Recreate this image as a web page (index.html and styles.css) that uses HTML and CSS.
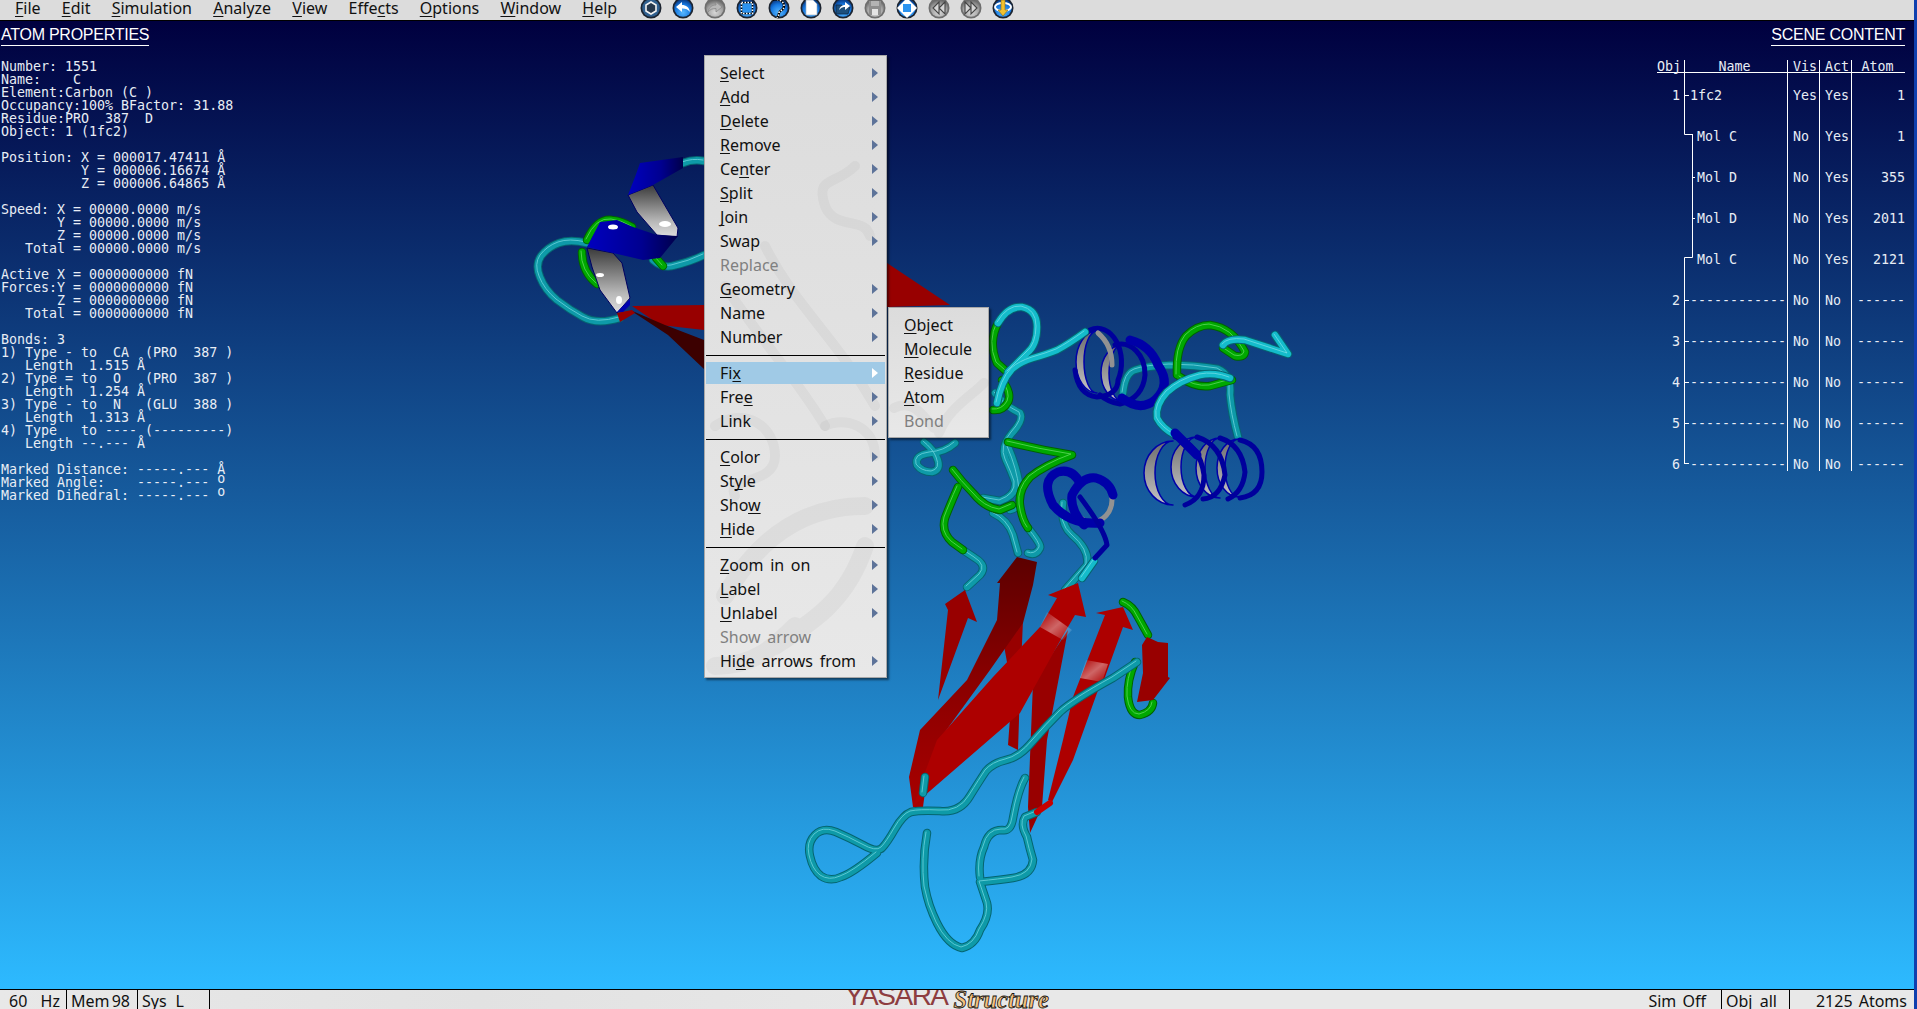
FILE: index.html
```html
<!doctype html>
<html lang="en">
	<head>
		<meta charset="utf-8" />
		<title>YASARA Structure</title>
		<link rel="stylesheet" href="styles.css">
	</head>
	<body>
		<svg class="defs" width="0" height="0">
			<defs>
				<radialGradient id="btn-blue" cx="50%" cy="75%" r="70%">
					<stop offset="0" stop-color="#58b8ff" />
					<stop offset="0.65" stop-color="#1678e0" />
					<stop offset="1" stop-color="#0a3f8c" />
				</radialGradient>
				<radialGradient id="btn-gray" cx="50%" cy="75%" r="70%">
					<stop offset="0" stop-color="#d8d8d8" />
					<stop offset="0.65" stop-color="#a2a2a2" />
					<stop offset="1" stop-color="#6a6a6a" />
				</radialGradient>
				<g id="btn-b">
					<circle cx="11" cy="11" r="10.5" fill="#1c2430" />
					<circle cx="11" cy="11" r="8.8" fill="url(#btn-blue)" />
				</g>
				<g id="btn-g">
					<circle cx="11" cy="11" r="10.5" fill="#6e6e6e" />
					<circle cx="11" cy="11" r="8.8" fill="url(#btn-gray)" />
				</g>
			</defs>
		</svg>

		<div class="window">
			<header class="menubar">
				<nav class="menubar-nav">
					<span><u>F</u>ile</span>
					<span><u>E</u>dit</span>
					<span><u>S</u>imulation</span>
					<span><u>A</u>nalyze</span>
					<span><u>V</u>iew</span>
					<span>Effe<u>c</u>ts</span>
					<span><u>O</u>ptions</span>
					<span><u>W</u>indow</span>
					<span><u>H</u>elp</span>
				</nav>
				<div class="toolbar">
					<svg viewBox="0 0 22 22"><circle cx="11" cy="11" r="10.5" fill="#1c2430" /><circle cx="11" cy="11" r="8.8" fill="#2f5f8e" /><path d="M11 5l5 3v6l-5 3-5-3V8z" fill="#26384c" stroke="#f2f2f2" stroke-width="1.6" /></svg>
					<svg viewBox="0 0 22 22"><use href="#btn-b" /><path d="M4 10l6-5v3c4 0 7 2 8 7-2-2.500-4-3.500-8-3.500V15z" fill="#fff" /></svg>
					<svg viewBox="0 0 22 22"><use href="#btn-g" /><path d="M18 10l-6-5v3c-4 0-7 2-8 7 2-2.500 4-3.500 8-3.500V15z" fill="#b8b8b8" stroke="#8a8a8a" stroke-width="0.8" /></svg>
					<svg viewBox="0 0 22 22"><use href="#btn-b" /><rect x="5.500" y="5.500" width="11" height="11" fill="#2b93f0" stroke="#000" stroke-width="1.600" /><rect x="5.500" y="5.500" width="11" height="11" fill="none" stroke="#fff" stroke-width="1.600" stroke-dasharray="1.500 1.500" /></svg>
					<svg viewBox="0 0 22 22"><use href="#btn-b" /><path d="M3 3c5-2 13 0 13 6 0 5-5 4-5 7 0 2-1 4-2 5" fill="none" stroke="#000" stroke-width="2.400" /><path d="M3 3c5-2 13 0 13 6 0 5-5 4-5 7 0 2-1 4-2 5" fill="none" stroke="#fff" stroke-width="1.600" stroke-dasharray="1.500 1.500" /></svg>
					<svg viewBox="0 0 22 22"><use href="#btn-b" /><path d="M6 3h7l4 4v11H6z" fill="#fff" stroke="#9ab" stroke-width="0.600" /></svg>
					<svg viewBox="0 0 22 22"><use href="#btn-b" /><path d="M4 8h6l1 2h7l-2 7H4z" fill="#1d4f7c" stroke="#0c2a48" stroke-width="0.800" /><path d="M7 13c1-4 4-5 6-5V5l5 4-5 4v-3c-3 0-4 1-6 3z" fill="#fff" /></svg>
					<svg viewBox="0 0 22 22"><use href="#btn-g" /><path d="M5 4h12v14H5z" fill="#8e8e8e" /><path d="M7 4h8v5H7z" fill="#b4b4b4" /><path d="M8 12h6v6H8z" fill="#e4e4e4" /></svg>
					<svg viewBox="0 0 22 22"><use href="#btn-b" /><path d="M11 1l10 10-10 10L1 11z" fill="#fff" /><rect x="7" y="7" width="8" height="8" fill="#2b93f0" /></svg>
					<svg viewBox="0 0 22 22"><use href="#btn-g" /><path d="M11 5l-6 6 6 6zM17 5l-6 6 6 6z" fill="#d4d4d4" stroke="#444" stroke-width="1.100" /></svg>
					<svg viewBox="0 0 22 22"><use href="#btn-g" /><path d="M5 5l6 6-6 6zM11 5l6 6-6 6z" fill="#d4d4d4" stroke="#444" stroke-width="1.100" /></svg>
					<svg viewBox="0 0 22 22"><use href="#btn-b" /><ellipse cx="11" cy="10" rx="8" ry="4" fill="none" stroke="#fff" stroke-width="2" /><path d="M9 3h4v10h3l-5 6-5-6h3z" fill="#f2c12e" stroke="#8a6a10" stroke-width="0.600" /></svg>
				</div>
			</header>

			<main class="scene">
				<svg class="protein" viewBox="0 21 1914 968" width="1914" height="968">
					<defs>
						<linearGradient id="sheet-dark" x1="0" y1="0" x2="0" y2="1">
							<stop offset="0" stop-color="#5c0000" />
							<stop offset="0.5" stop-color="#8a0000" />
							<stop offset="1" stop-color="#a80000" />
						</linearGradient>
						<linearGradient id="band" x1="0" y1="0" x2="1" y2="1">
							<stop offset="0" stop-color="#fff" stop-opacity="0" />
							<stop offset="0.5" stop-color="#fff" stop-opacity="0.4" />
							<stop offset="1" stop-color="#fff" stop-opacity="0" />
						</linearGradient>
						<linearGradient id="ribbon-gray" x1="0" y1="0" x2="0" y2="1">
							<stop offset="0" stop-color="#3a3a3a" />
							<stop offset="0.7" stop-color="#b8b8b8" />
							<stop offset="1" stop-color="#dedede" />
						</linearGradient>
						<linearGradient id="ring-gray" x1="0" y1="0" x2="0" y2="1">
							<stop offset="0" stop-color="#6c6c6c" />
							<stop offset="1" stop-color="#c4c4c4" />
						</linearGradient>
						<linearGradient id="ribbon-blue" x1="0" y1="0" x2="1" y2="0">
							<stop offset="0" stop-color="#0000c0" />
							<stop offset="0.6" stop-color="#000090" />
							<stop offset="1" stop-color="#00004a" />
						</linearGradient>
						<g id="teal-back">
							<path d="M587 243Q570 239 559 243Q548 247 541 256Q535 265 540 277Q545 290 557 300Q570 310 583 317Q597 325 620 318" />
							<path d="M683 163Q693 159 704 161" />
							<path d="M653 260Q662 268 672 266Q690 262 704 255" />
							<path d="M995 393Q1005 406 1020 413Q1024 420 1012 433Q1000 447 1006 460Q1012 473 1015 482Q1017 495 1000 501L983 498" />
							<path d="M1008 447Q1018 470 1020 490Q1022 508 1010 510" />
							<path d="M993 513Q1008 520 1013 535L1018 553" />
							<path d="M955 443Q945 452 930 453Q914 455 917 465Q922 472 932 472Q942 470 937 458Q934 450 924 442" />
							<path d="M1028 528Q1042 545 1040 548Q1036 556 1028 553" />
							<path d="M963 550L975 558Q988 566 980 575L967 587" />
							<path d="M1063 503Q1060 525 1072 535Q1090 550 1087 565L1065 590" />
							<path d="M1123 393Q1125 373 1135 370Q1146 366 1170 365Q1195 365 1218 369Q1232 375 1230 395Q1232 415 1238 437" />
						</g>
						<g id="teal-front">
							<path d="M998 323Q1008 306 1022 307Q1037 310 1037 327Q1037 345 1027 353Q1018 362 1008 372" />
							<path d="M997 403Q1001 381 1012 369Q1020 362 1033 358Q1047 354 1057 350Q1070 343 1085 332" />
							<path d="M1230 378Q1215 372 1200 375Q1180 380 1167 392Q1155 405 1157 418Q1162 428 1175 435" />
							<path d="M1223 345Q1228 338 1245 340L1288 354L1275 335" />
							<path d="M1094 561L1082 578" />
						</g>
						<g id="teal-low">
							<path d="M925 777L923 793" />
							<path d="M980 877Q978 860 984 847Q988 830 1002 830Q1011 832 1013 818Q1018 790 1025 778" />
							<path d="M927 833Q922 860 925 887Q928 905 937 923Q948 945 962 948Q975 945 980 930Q990 915 987 903L980 882Q1000 880 1013 878Q1032 875 1033 860Q1030 850 1027 837Q1020 825 1025 817L1037 812" />
							<path d="M1137 662L1113 678Q1073 700 1060 712Q1047 725 1033 741Q1020 757 1006 760Q993 763 986 771Q980 780 970 796Q960 813 940 811Q920 810 911 812Q903 815 895 829Q887 843 882 848Q877 853 863 845Q850 838 836 832Q823 827 815 835Q807 843 810 856Q813 870 821 876Q830 882 841 877Q853 873 877 853" />
						</g>
						<g id="green-coils">
							<path d="M582 252Q582 272 597 284" />
							<path d="M587 240Q597 218 612 220Q622 221 632 227" />
							<path d="M656 258L663 266" />
							<path d="M998 323Q988 342 997 363L1006 371" />
							<path d="M1002 380Q1012 393 1008 402Q1003 411 993 410" />
							<path d="M1008 442Q1040 450 1072 455Q1045 465 1030 477Q1018 490 1020 505Q1022 520 1028 528" />
							<path d="M953 470Q962 482 973 493Q985 508 1000 510L1012 505" />
							<path d="M958 487Q950 505 945 518Q941 532 952 542L963 550" />
							<path d="M1177 375Q1176 348 1186 336Q1197 325 1210 325Q1233 328 1245 352Q1244 358 1235 356L1223 348" />
							<path d="M1180 377Q1195 388 1210 386L1232 380" />
							<path d="M1123 602Q1133 606 1138 617L1148 635" />
							<path d="M1135 662Q1127 680 1128 697Q1130 715 1140 715Q1152 712 1153 703" />
						</g>
					</defs>

					<!-- small helix, top left -->
					<use href="#teal-back" class="coil-dark" />
					<use href="#teal-back" class="coil-teal" />
					<use href="#teal-back" class="coil-shine" />

					<polygon class="sheet-flat" points="632,306 704,305 704,330 660,325" />
					<polygon class="sheet-shade" points="630,310 665,325 704,340 704,369 668,335" />
					<polygon class="sheet-flat" points="617,313 632,310 635,313 620,322" />
					<polygon class="sheet-flat" points="887,263 950,305 887,307" />

					<use href="#green-coils" class="coil-greendark" />
					<use href="#green-coils" class="coil-green" />
					<use href="#green-coils" class="coil-greenshine" />

					<polygon fill="url(#ribbon-gray)" stroke="#000060" points="628,195 653,185 678,228 677,237 657,235 637,212" />
					<polygon fill="url(#ribbon-blue)" points="640,163 683,157 683,168 653,185 628,195 635,177" />
					<polygon fill="url(#ribbon-gray)" stroke="#000060" points="587,248 613,253 622,263 630,298 617,313 600,290 592,267" />
					<polygon fill="url(#ribbon-blue)" points="587,247 600,222 617,220 633,227 657,235 678,236 660,258 643,260 613,253" />
					<polygon fill="#0000b0" points="617,312 630,299 630,305 623,312" />
					<ellipse class="glint" cx="665" cy="224" rx="6" ry="3" />
					<ellipse class="glint" cx="600" cy="275" rx="4" ry="2" />
					<ellipse class="glint" cx="619" cy="300" rx="3" ry="4" />
					<ellipse class="glint" cx="613" cy="227" rx="5" ry="2.500" />

					<!-- helix, upper middle -->
					<path class="crescent" d="M1097 331A21 31 0 0 0 1097 393A13 31 0 0 1 1097 331Z" />
					<path class="crescent" d="M1122 345A21 28 0 0 0 1122 401A13 28 0 0 1 1122 345Z" />
					<path class="ring-blue" d="M1090 330A24 34 0 0 1 1118 380Q1118 395 1097 397Q1078 395 1075 370" />
					<path class="ring-blue" d="M1115 345A24 30 0 0 1 1145 375Q1143 398 1120 404Q1108 402 1100 395" />
					<path class="ring-blue-wide" d="M1130 340Q1150 345 1158 365Q1172 385 1155 400Q1140 412 1122 398" />
					<path class="ring-gray" d="M1098 333Q1112 345 1112 365" />

					<use href="#teal-front" class="coil-dark" />
					<use href="#teal-front" class="coil-bright" />
					<use href="#teal-front" class="coil-shine" />

					<!-- helix, right -->
					<path class="crescent" d="M1239 439A22 29 0 0 0 1239 497A14 29 0 0 1 1239 439Z" />
					<path class="crescent" d="M1220 438A24 30 0 0 0 1220 498A15 30 0 0 1 1220 438Z" />
					<path class="crescent" d="M1197 437A26 30 0 0 0 1197 497A16 30 0 0 1 1197 437Z" />
					<path class="crescent" d="M1173 441A29 32 0 0 0 1173 505A18 32 0 0 1 1173 441Z" />
					<path class="ring-blue" d="M1175 437Q1200 445 1204 475Q1204 498 1185 505" />
					<path class="ring-blue" d="M1197 437Q1222 445 1225 475Q1220 498 1203 499" />
					<path class="ring-blue" d="M1220 438Q1242 445 1245 472Q1243 492 1228 499" />
					<path class="ring-blue" d="M1240 440Q1262 445 1262 472Q1262 495 1240 498" />
					<path class="ring-blue-wide" d="M1175 433L1197 455" />

					<!-- helix, centre -->
					<ellipse class="ring-gray" cx="1092" cy="500" rx="20" ry="22" />
					<path class="ring-blue-wide" d="M1100 523Q1070 525 1053 505Q1040 480 1058 472Q1072 468 1080 483" />
					<path class="ring-blue-wide" d="M1084 525Q1070 510 1072 495Q1082 476 1096 478Q1110 482 1113 495" />
					<path class="ring-blue" d="M1080 497Q1105 530 1107 545L1095 558" />

					<!-- sheets -->
					<polygon class="sheet-flat" points="965,590 977,622 968,618 938,700 948,610 945,604" />
					<polygon class="sheet-flat" points="1003,640 1023,620 1020,690 1018,750 1008,745 1012,690" />
					<polygon class="sheet-flat" points="1028,807 1033,683 1068,630 1047,740 1042,807 1030,833" />
					<polygon fill="url(#sheet-dark)" points="1017,557 1037,562 1033,585 1023,623 990,670 937,743 927,777 923,807 913,807 909,777 920,730 967,680 997,620 1000,583 997,583" />
					<polygon class="sheet-bright" points="1078,583 1086,617 1075,615 1065,632 1020,713 923,797 913,807 927,767 937,740 993,677 1040,627 1057,598 1048,595" />
					<polygon fill="url(#band)" points="1047,612 1072,630 1063,640 1040,627" />
					<polygon class="sheet-bright" points="1123,607 1133,630 1123,627 1105,677 1097,693 1073,760 1052,802 1048,800 1063,740 1073,697 1105,615 1096,613" />
					<polygon fill="url(#band)" points="1086,660 1108,664 1102,682 1080,678" />
					<polygon class="sheet-flat" points="1147,637 1158,642 1168,643 1168,677 1170,678 1153,700 1137,702 1143,673 1142,645" />

					<use href="#teal-low" class="coil-dark" />
					<use href="#teal-low" class="coil-teal" />
					<use href="#teal-low" class="coil-shine" />
					<path class="coil-red" d="M1037 812L1050 803" />
				</svg>

				<section class="atom-panel">
					<h2 class="panel-title">ATOM PROPERTIES</h2>
<pre class="readout">Number: 1551
Name:    C
Element:Carbon (C )
Occupancy:100% BFactor: 31.88
Residue:PRO  387  D
Object: 1 (1fc2)

Position: X = 000017.47411 Å
          Y = 000006.16674 Å
          Z = 000006.64865 Å

Speed: X = 00000.0000 m/s
       Y = 00000.0000 m/s
       Z = 00000.0000 m/s
   Total = 00000.0000 m/s

Active X = 0000000000 fN
Forces:Y = 0000000000 fN
       Z = 0000000000 fN
   Total = 0000000000 fN

Bonds: 3
1) Type - to  CA  (PRO  387 )
   Length  1.515 Å
2) Type = to  O   (PRO  387 )
   Length  1.254 Å
3) Type - to  N   (GLU  388 )
   Length  1.313 Å
4) Type   to ---- (---------)
   Length --.--- Å

Marked Distance: -----.--- Å
Marked Angle:    -----.--- <span class="deg">o</span>
Marked Dihedral: -----.--- <span class="deg">o</span></pre>
				</section>

				<section class="scene-panel">
					<h2 class="panel-title">SCENE CONTENT</h2>
					<div class="scene-table">
						<svg class="tree" viewBox="0 0 40 410" width="40" height="410">
							<path d="M0.500 0V74.500H8.500M8.500 74V197.500H0.500V403M8 117.500H11M8 158.500H11M0 35.500H5M0 240.500H5M0 281.500H5M0 322.500H5M0 363.500H5M0 403.500H5" />
						</svg>
						<div class="scene-row scene-head">
							<span class="cell-obj">Obj</span><span class="cell-name cell-title">Name</span><span class="cell-vis">Vis</span><span class="cell-act">Act</span><span class="cell-atom cell-title">Atom</span>
						</div>
						<div class="scene-row"><span class="cell-obj">1</span><span class="cell-name">1fc2</span><span class="cell-vis">Yes</span><span class="cell-act">Yes</span><span class="cell-atom">1</span></div>
						<div class="scene-row"><span class="cell-obj"></span><span class="cell-name cell-sub">Mol C</span><span class="cell-vis">No</span><span class="cell-act">Yes</span><span class="cell-atom">1</span></div>
						<div class="scene-row"><span class="cell-obj"></span><span class="cell-name cell-sub">Mol D</span><span class="cell-vis">No</span><span class="cell-act">Yes</span><span class="cell-atom">355</span></div>
						<div class="scene-row"><span class="cell-obj"></span><span class="cell-name cell-sub">Mol D</span><span class="cell-vis">No</span><span class="cell-act">Yes</span><span class="cell-atom">2011</span></div>
						<div class="scene-row"><span class="cell-obj"></span><span class="cell-name cell-sub">Mol C</span><span class="cell-vis">No</span><span class="cell-act">Yes</span><span class="cell-atom">2121</span></div>
						<div class="scene-row"><span class="cell-obj">2</span><span class="cell-name">------------</span><span class="cell-vis">No</span><span class="cell-act">No</span><span class="cell-atom">------</span></div>
						<div class="scene-row"><span class="cell-obj">3</span><span class="cell-name">------------</span><span class="cell-vis">No</span><span class="cell-act">No</span><span class="cell-atom">------</span></div>
						<div class="scene-row"><span class="cell-obj">4</span><span class="cell-name">------------</span><span class="cell-vis">No</span><span class="cell-act">No</span><span class="cell-atom">------</span></div>
						<div class="scene-row"><span class="cell-obj">5</span><span class="cell-name">------------</span><span class="cell-vis">No</span><span class="cell-act">No</span><span class="cell-atom">------</span></div>
						<div class="scene-row scene-last"><span class="cell-obj">6</span><span class="cell-name">------------</span><span class="cell-vis">No</span><span class="cell-act">No</span><span class="cell-atom">------</span></div>
					</div>
				</section>

				<div class="popup popup-main">
					<svg class="watermark" viewBox="0 0 183 623" width="183" height="623">
						<path d="M150 110c-20 20-40 10-30 40 10 25 40 10 45 30" />
						<path d="M60 190c30 60 70 90 110 160M20 230c40 60 70 90 100 140" />
						<path d="M10 370c30-20 60 0 60 30s-50 20-40 40M120 370c20-10 50 0 50 30" />
						<path class="watermark-wide" d="M20 540c40-70 90-90 140-90M70 590c30-20 70-40 90-100M10 610c40 0 60-20 80-40" />
					</svg>
					<div class="popup-item has-sub"><span><u>S</u>elect</span></div>
					<div class="popup-item has-sub"><span><u>A</u>dd</span></div>
					<div class="popup-item has-sub"><span><u>D</u>elete</span></div>
					<div class="popup-item has-sub"><span><u>R</u>emove</span></div>
					<div class="popup-item has-sub"><span>Ce<u>n</u>ter</span></div>
					<div class="popup-item has-sub"><span><u>S</u>plit</span></div>
					<div class="popup-item has-sub"><span><u>J</u>oin</span></div>
					<div class="popup-item has-sub"><span>Swap</span></div>
					<div class="popup-item is-disabled"><span>Replace</span></div>
					<div class="popup-item has-sub"><span><u>G</u>eometry</span></div>
					<div class="popup-item has-sub"><span>Name</span></div>
					<div class="popup-item has-sub"><span>Number</span></div>
					<hr class="popup-sep" />
					<div class="popup-item has-sub is-active"><span>Fi<u>x</u></span></div>
					<div class="popup-item has-sub"><span>Fre<u>e</u></span></div>
					<div class="popup-item has-sub"><span>Link</span></div>
					<hr class="popup-sep" />
					<div class="popup-item has-sub"><span><u>C</u>olor</span></div>
					<div class="popup-item has-sub"><span>St<u>y</u>le</span></div>
					<div class="popup-item has-sub"><span>Sho<u>w</u></span></div>
					<div class="popup-item has-sub"><span><u>H</u>ide</span></div>
					<hr class="popup-sep" />
					<div class="popup-item has-sub"><span><u>Z</u>oom in on</span></div>
					<div class="popup-item has-sub"><span><u>L</u>abel</span></div>
					<div class="popup-item has-sub"><span><u>U</u>nlabel</span></div>
					<div class="popup-item is-disabled"><span>Show arrow</span></div>
					<div class="popup-item has-sub"><span>Hi<u>d</u>e arrows from</span></div>
				</div>

				<div class="popup popup-sub">
					<svg class="watermark" viewBox="0 0 101 131" width="101" height="131">
						<path d="M50 125c10-25 30-35 45-50M5 100c20-10 30 10 40 20" />
					</svg>
					<div class="popup-item"><span><u>O</u>bject</span></div>
					<div class="popup-item"><span><u>M</u>olecule</span></div>
					<div class="popup-item"><span><u>R</u>esidue</span></div>
					<div class="popup-item"><span><u>A</u>tom</span></div>
					<div class="popup-item is-disabled"><span>Bond</span></div>
				</div>
			</main>

			<footer class="statusbar">
				<div class="status-cell status-hz"><span>60</span><span>Hz</span></div>
				<div class="status-cell status-mem"><span>Mem</span><span>98</span></div>
				<div class="status-cell status-sys"><span>Sys</span><span>L</span></div>
				<div class="status-logo">
					<span class="logo-name">YASARA</span>
					<span class="logo-kind">Structure</span>
				</div>
				<div class="status-cell status-sim">Sim Off</div>
				<div class="status-cell status-obj"><span>Obj</span><span>all</span></div>
				<div class="status-cell status-atoms">2125 Atoms</div>
			</footer>
		</div>
	</body>
</html>
```

FILE: styles.css
```css
/* Page */
html,
body {
	height: 100%;
	margin: 0;
}

body {
	background-color: #0f3fae;
	font-family: "Noto Sans", sans-serif;
	overflow: hidden;
}

.defs {
	display: block;
	height: 0;
}

.window {
	display: flex;
	flex-direction: column;
	height: 1009px;
	width: 1914px;
}

u {
	text-decoration-skip-ink: none;
	text-decoration-thickness: 1px;
	text-underline-offset: 2px;
}

/* Menu bar */
.menubar {
	background-color: #dcdcdc;
	border-bottom: 1px solid #000;
	color: #111;
	display: flex;
	flex: 0 0 auto;
	height: 20px;
	overflow: hidden;
}

.menubar-nav {
	box-sizing: border-box;
	display: flex;
	flex: 0 0 640px;
	font-size: 16px;
	gap: 21.200px;
	line-height: 17px;
	padding-left: 15px;
}

.toolbar {
	display: flex;
	gap: 10px;
	margin-top: -3px;
}

.toolbar svg {
	flex: 0 0 22px;
	height: 22px;
	width: 22px;
}

/* 3D scene */
.scene {
	background: linear-gradient(#00003f, #2dbaff);
	flex: 1 1 auto;
	overflow: hidden;
	position: relative;
}

.protein {
	display: block;
	left: 0;
	position: absolute;
	top: 0;
}

.protein use,
.protein path,
.protein ellipse {
	fill: none;
	stroke-linecap: round;
	stroke-linejoin: round;
}

.coil-dark {
	stroke: #056570;
	stroke-width: 8.500;
}

.coil-teal {
	stroke: #0e9aa8;
	stroke-width: 6.500;
}

.coil-bright {
	stroke: #14bccb;
	stroke-width: 6.500;
}

.coil-shine {
	opacity: 0.6;
	stroke: #8fe8ef;
	stroke-width: 1;
	transform: translate(-1px, -1px);
}

.coil-greendark {
	stroke: #006200;
	stroke-width: 8.500;
}

.coil-green {
	stroke: #00a800;
	stroke-width: 6.500;
}

.coil-greenshine {
	opacity: 0.6;
	stroke: #7fe87f;
	stroke-width: 1;
	transform: translate(-1px, -1px);
}

.protein .coil-red {
	stroke: #c80000;
	stroke-width: 6;
}

.sheet-flat {
	fill: #980000;
}

.sheet-shade {
	fill: #3c0000;
}

.sheet-bright {
	fill: #ad0000;
}

.protein .glint {
	fill: #fff;
}

.protein .crescent {
	fill: url(#ring-gray);
	stroke: #0000a8;
	stroke-width: 1.500;
}

.protein .ring-gray {
	stroke: #929292;
	stroke-width: 5;
}

.protein .ring-blue {
	stroke: #00009c;
	stroke-width: 5;
}

.protein .ring-blue-wide {
	stroke: #0000a8;
	stroke-width: 9;
}

/* Text panels over the scene */
.panel-title {
	border-bottom: 1px solid #fff;
	color: #fff;
	display: inline-block;
	font-family: "Liberation Sans", sans-serif;
	font-size: 16px;
	font-weight: 400;
	letter-spacing: -0.250px;
	line-height: 20px;
	margin: 0;
}

.atom-panel {
	color: #e8edf5;
	left: 1px;
	position: absolute;
	top: 2px;
}

.readout {
	font-family: "DejaVu Sans Mono", monospace;
	font-size: 13.300px;
	line-height: 13px;
	margin: 14px 0 0;
}

.deg {
	line-height: 0;
	vertical-align: 4px;
}

.scene-panel {
	color: #e8edf5;
	font-family: "DejaVu Sans Mono", monospace;
	font-size: 13.300px;
	position: absolute;
	right: 9px;
	text-align: right;
	top: 4px;
	width: 248px;
}

.scene-table {
	margin-top: 14px;
	position: relative;
	text-align: left;
}

.tree {
	fill: none;
	left: 27px;
	position: absolute;
	stroke: #fff;
	top: 0;
}

.scene-row {
	display: grid;
	grid-template-columns: 27px 103px 32px 32px 54px;
	height: 41px;
	line-height: 13px;
}

.scene-row > span {
	box-sizing: border-box;
	padding-top: 16px;
	white-space: pre;
}

.scene-head {
	border-bottom: 1px solid #fff;
	box-sizing: border-box;
	height: 13px;
}

.scene-head > span {
	padding-top: 0;
}

.scene-last {
	height: 28px;
}

.cell-obj {
	padding-right: 4px;
	text-align: right;
}

.cell-vis,
.cell-act,
.cell-atom {
	border-left: 1px solid #fff;
}

.cell-name {
	padding-left: 6px;
}

.cell-atom {
	text-align: right;
}

.cell-sub {
	padding-left: 13px;
}

.cell-vis,
.cell-act {
	padding-left: 5px;
}

.cell-title {
	padding-left: 0;
	padding-right: 2px;
	text-align: center;
}

.scene-head .cell-obj {
	padding-right: 0;
	text-align: left;
}

/* Popup menus */
.popup {
	background: linear-gradient(#dcdcdc, #e8e8e8);
	border: 1px solid #a8a8a8;
	box-shadow: 2px 2px 2px rgba(0, 0, 0, 0.5);
	box-sizing: border-box;
	color: #111;
	font-size: 16px;
	padding: 5px 0 4px;
	position: absolute;
	word-spacing: 2.500px;
}

.popup-main {
	left: 704px;
	top: 34px;
	width: 183px;
}

.popup-sub {
	left: 888px;
	top: 286px;
	width: 101px;
}

.watermark {
	fill: none;
	left: 0;
	position: absolute;
	stroke: rgba(0, 0, 0, 0.035);
	stroke-linecap: round;
	stroke-width: 10;
	top: 0;
}

.watermark-wide {
	stroke-width: 18;
}

.popup-item {
	align-items: center;
	background-clip: padding-box;
	border: 1px solid transparent;
	box-sizing: border-box;
	display: flex;
	height: 24px;
	line-height: 22px;
	padding-left: 14px;
	position: relative;
}

.has-sub::after {
	border-bottom: 5px solid transparent;
	border-left: 6px solid #5d7399;
	border-top: 5px solid transparent;
	content: "";
	margin-left: auto;
	margin-right: 7px;
}

.is-active {
	background-color: #a0cae6;
}

.is-active::after {
	border-left-color: #fff;
}

.is-disabled {
	color: #808080;
}

.popup-sep {
	background-color: #000;
	border: 0;
	height: 1px;
	margin: 6px 1px 5px;
	position: relative;
}

/* Status bar */
.statusbar {
	background: linear-gradient(90deg, #e8e8e8, #e2e2e2 25%, #e8e8e8 50%);
	border-top: 1px solid #000;
	color: #111;
	display: flex;
	flex: 0 0 auto;
	font-size: 16px;
	height: 19px;
	line-height: 22px;
	overflow: hidden;
	word-spacing: 2px;
}

.status-cell {
	border-right: 1px solid #000;
	box-sizing: border-box;
	display: flex;
	flex: 0 0 auto;
	justify-content: space-between;
}

.status-hz {
	padding: 0 6px 0 9px;
	width: 67px;
}

.status-mem {
	padding: 0 7px 0 4px;
	width: 71px;
}

.status-sys {
	padding: 0 25px 0 4px;
	width: 72px;
}

.status-logo {
	align-items: flex-start;
	display: flex;
	flex: 0 0 200px;
	gap: 6px;
	line-height: 20px;
	margin-left: 635px;
	min-width: 0;
	white-space: nowrap;
}

.logo-name {
	color: #8e3d40;
	font-family: "Liberation Sans", sans-serif;
	font-size: 28px;
	font-weight: 400;
	letter-spacing: -1.500px;
	margin-top: -4px;
}

.logo-kind {
	color: #f5c27e;
	font-family: "Liberation Serif", serif;
	font-size: 24.500px;
	font-style: italic;
	font-weight: 700;
	-webkit-text-stroke: 0.8px #111;
}

.status-sim {
	justify-content: flex-end;
	padding-right: 15px;
	width: 677px;
}

.status-obj {
	padding: 0 12px 0 4px;
	width: 68px;
}

.status-atoms {
	border-right: 0;
	flex: 1 1 auto;
	justify-content: flex-end;
	padding-right: 7px;
}
```
